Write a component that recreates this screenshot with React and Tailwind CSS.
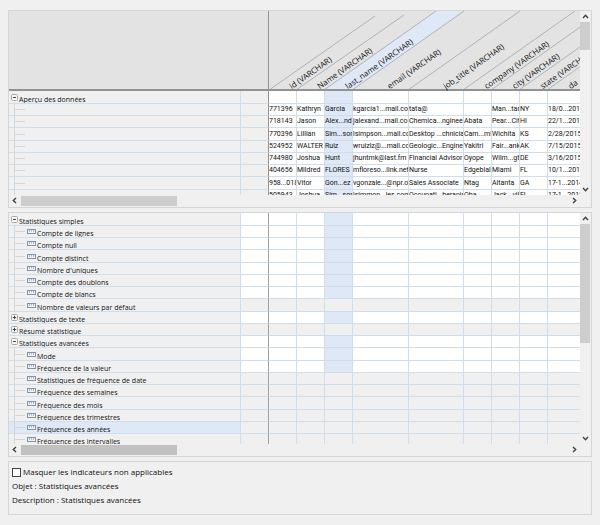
import { Fragment } from "react";

const COLUMNS = [
  { name: "id (VARCHAR)", width: "w-[28px]", label: "left-[24px]" },
  { name: "Name (VARCHAR)", width: "w-[28px]", label: "left-[24px]" },
  { name: "last_name (VARCHAR)", width: "w-[28px]", label: "left-[24px]", selected: true },
  { name: "email (VARCHAR)", width: "w-[56px]", label: "left-[38px]" },
  { name: "job_title (VARCHAR)", width: "w-[55px]", label: "left-[38px]" },
  { name: "company (VARCHAR)", width: "w-[28px]", label: "left-[24px]" },
  { name: "city (VARCHAR)", width: "w-[28px]", label: "left-[24px]" },
  { name: "state (VARCHAR)", width: "w-[28px]", label: "left-[24px]" },
  { name: "da", width: "", label: "left-[24px]" },
];

const PREVIEW = [
  ["771396", "Kathryn", "Garcia", "kgarcia1...mail.co", "tata@", "", "Man...tar", "NY", "18/0...2012"],
  ["718143", "Jason", "Alex...nd", "jalexand...mail.co", "Chemica...ngineer", "Abata", "Pear...Cit", "HI", "22/1...2015"],
  ["770396", "Lillian", "Sim...sor", "lsimpson...mail.co", "Desktop ...chnicia", "Cam...ml", "Wichita", "KS", "2/28/2015"],
  ["524952", "WALTER", "Ruiz", "wruizlz@...mail.co", "Geologic...Engine", "Yakitri", "Fair...ank", "AK", "7/15/2015"],
  ["744980", "Joshua", "Hunt", "jhuntmk@last.fm", "Financial Advisor", "Oyope", "Wilm...gt", "DE", "3/16/2015"],
  ["404656", "Mildred", "FLORES", "mfloreso...link.net", "Nurse", "Edgeblal", "Miami", "FL", "10/1...2015"],
  ["958...018", "Vitor", "Gon...ez", "vgonzale...@npr.o", "Sales Associate", "Ntag", "Altanta", "GA", "17-1...2014"],
  ["505943", "Joshua", "Sim...son", "jsimmon...les.com", "Occupati...herapis", "Oba", "Jack...vill", "FL", "17-1...2015"],
];

const INDICATORS = [
  { name: "Statistiques simples", group: "open", on: true },
  { name: "Compte de lignes", on: true },
  { name: "Compte null", on: true },
  { name: "Compte distinct", on: true },
  { name: "Nombre d'uniques", on: true },
  { name: "Compte des doublons", on: true },
  { name: "Compte de blancs", on: true },
  { name: "Nombre de valeurs par défaut" },
  { name: "Statistiques de texte", group: "closed", on: true },
  { name: "Résumé statistique", group: "closed" },
  { name: "Statistiques avancées", group: "open", on: true },
  { name: "Mode", on: true },
  { name: "Fréquence de la valeur", on: true },
  { name: "Statistiques de fréquence de date" },
  { name: "Fréquence des semaines" },
  { name: "Fréquence des mois" },
  { name: "Fréquence des trimestres" },
  { name: "Fréquence des années", selected: true },
  { name: "Fréquence des intervalles" },
];

const ROW = "h-[12px] first:h-[13px] nth-[4n]:h-[13px]";
const CELL = "overflow-hidden border-b border-r border-[#cfdeed] p-0";

function Chevron({ d, label }) {
  return (
    <button type="button" aria-label={label} className="flex size-[11px] shrink-0 items-center justify-center">
      <svg viewBox="0 0 7 7" className="size-[7px]" fill="none" stroke="#404040" strokeWidth="1.4">
        <path d={d} />
      </svg>
    </button>
  );
}

function Panel({ height, thumb, hThumb, children }) {
  return (
    <section className="border border-[#d4d6d6] pb-px">
      <div className={`flex ${height}`}>
        <div className="relative min-w-0 flex-1 overflow-hidden">{children}</div>
        <div className="flex w-[11px] flex-col">
          <Chevron label="Défiler vers le haut" d="M1 5 3.5 2.3 6 5" />
          <div className="flex-1">
            <div className={`w-[10px] bg-[#cdcdcd] ${thumb}`} />
          </div>
          <Chevron label="Défiler vers le bas" d="M1 2 3.5 4.7 6 2" />
        </div>
      </div>
      <div className="flex h-[11px] items-center pr-[11px]">
        <Chevron label="Défiler vers la gauche" d="M5 1 2.3 3.5 5 6" />
        <div className="flex-1 pl-px">
          <div className={`h-[10px] w-[156px] ${hThumb}`} />
        </div>
        <Chevron label="Défiler vers la droite" d="M2 1 4.7 3.5 2 6" />
      </div>
    </section>
  );
}

function ColGroup() {
  return (
    <colgroup>
      <col className="w-[232px]" />
      <col className="w-[28px]" />
      {COLUMNS.map((c) => (
        <col key={c.name} className={c.width} />
      ))}
    </colgroup>
  );
}

function Toggle({ open, name }) {
  return (
    <button type="button" aria-label={name} aria-expanded={open} className="ml-[2px] size-[7px] shrink-0">
      <svg viewBox="0 0 7 7" className="size-[7px]" fill="none">
        <rect x="0.5" y="0.5" width="6" height="6" rx="1" fill="#f6f6f6" stroke="#a8a8a8" />
        <path d={open ? "M2 3.5h3" : "M1.8 3.5h3.4M3.5 1.8v3.4"} stroke="#444" />
      </svg>
    </button>
  );
}

function Branch() {
  return (
    <span className="ml-[5px] flex h-[12px] w-[11px] shrink-0 items-center border-l border-[#d6d6d6]">
      <span className="h-px w-full bg-[#d6d6d6]" />
    </span>
  );
}

function Ruler() {
  return (
    <svg viewBox="0 0 9 5" className="ml-[2px] h-[5px] w-[9px] shrink-0" fill="none">
      <rect x="0.5" y="0.5" width="8" height="4" fill="#eef2f7" stroke="#8494a8" />
      <path d="M2.5 1v2M4.5 1v1.5M6.5 1v2" stroke="#8e9cae" strokeWidth="0.7" />
    </svg>
  );
}

/* Slanted separators between the column titles */
function Slants() {
  return (
    <svg className="absolute left-[260px] top-0 h-[79px] w-[320px]" viewBox="0 0 320 79" fill="none" stroke="#b2b2b2">
      <path d="M55 79 167 0H195L83 79Z" fill="#dee8f7" stroke="none" />
      <path d="M0 79 106 5M27 79 135 4M55 79 167 0M83 79 195 0M139 79 251 0M194 79 306 0M222 79 334 0M250 79 362 0M278 79 390 0" />
    </svg>
  );
}

function Preview() {
  return (
    <>
      <Slants />
      <table className="w-full table-fixed border-separate border-spacing-0 text-left">
        <ColGroup />
        <thead>
          <tr className="h-[80px] bg-[#e3e3e3]">
            <td className="border-b-2 border-[#929292] p-0" />
            <td className="border-b-2 border-r border-[#929292] p-0" />
            {COLUMNS.map((c) => (
              <th key={c.name} scope="col" className="relative border-b-2 border-[#929292] p-0 font-normal">
                <span className={`absolute -bottom-[2px] origin-bottom-left -rotate-35 whitespace-nowrap text-[8px] leading-[10px] ${c.label}`}>
                  {c.name}
                </span>
              </th>
            ))}
          </tr>
        </thead>
        <tbody>
          <tr className={ROW}>
            <th scope="row" className={`${CELL} font-normal`}>
              <div className="flex h-[11px] items-center">
                <Toggle open name="Aperçu des données" />
                <span className="ml-px pt-[5px] leading-[10px]">Aperçu des données</span>
              </div>
            </th>
            <td className={`${CELL} border-r-[#929292]`} />
            {COLUMNS.map((c) => (
              <td key={c.name} className={`${CELL} last:border-r-0 ${c.selected ? "bg-[#dee8f7]" : "bg-white"}`} />
            ))}
          </tr>
          {PREVIEW.map((row) => (
            <tr key={row[0]} className={ROW}>
              <td className={CELL}>
                <div className="flex h-[11px] items-center">
                  <Branch />
                </div>
              </td>
              <td className={`${CELL} border-r-[#929292]`} />
              {row.map((v, i) => (
                <td
                  key={i}
                  className={`${CELL} whitespace-nowrap font-[Roboto,sans-serif] leading-[11px] last:border-r-0 ${COLUMNS[i].selected ? "bg-[#dee8f7]" : "bg-white"}`}
                >
                  {v}
                </td>
              ))}
            </tr>
          ))}
        </tbody>
      </table>
    </>
  );
}

function Indicators() {
  return (
    <table className="w-full table-fixed border-separate border-spacing-0 text-left">
      <ColGroup />
      <tbody>
        {INDICATORS.map((r) => (
          <tr key={r.name} className={ROW}>
            <th scope="row" className={`${CELL} font-normal ${r.selected ? "bg-[#dee8f7]" : ""}`}>
              <div className="flex h-[11px] items-center whitespace-nowrap">
                {r.group ? (
                  <Toggle open={r.group === "open"} name={r.name} />
                ) : (
                  <Fragment>
                    <Branch />
                    <Ruler />
                  </Fragment>
                )}
                <span className="ml-px pt-[5px] leading-[10px]">{r.name}</span>
              </div>
            </th>
            <td className={`${CELL} border-r-[#a0a0a0] ${r.on ? "bg-white" : ""}`} />
            {COLUMNS.map((c) => (
              <td
                key={c.name}
                className={`${CELL} last:border-r-0 ${r.on ? (c.selected ? "bg-[#dee8f7]" : "bg-white") : ""}`}
              />
            ))}
          </tr>
        ))}
      </tbody>
    </table>
  );
}

export default function App() {
  return (
    <main className="flex min-h-screen flex-col gap-1 bg-[#f0f0f0] px-2 pt-[10px] pb-2 font-['Open_Sans','Noto_Sans',sans-serif] text-[7px] text-[#111]">
      <Panel height="h-[184px]" thumb="h-[28px]" hThumb="bg-[#cdcdcd]">
        <Preview />
      </Panel>
      <Panel height="h-[231px]" thumb="h-[119px]" hThumb="bg-[#c1c1c1]">
        <Indicators />
      </Panel>
      <section className="flex flex-col gap-[2px] border border-[#d4d6d6] px-[3px] pt-[4px] pb-[8px] text-[8px] leading-[12px]">
        <label className="flex items-center gap-[2px]">
          <input type="checkbox" className="size-[9px] appearance-none border border-[#444] bg-white" />
          Masquer les indicateurs non applicables
        </label>
        <p>Objet : Statistiques avancées</p>
        <p>Description : Statistiques avancées</p>
      </section>
    </main>
  );
}
